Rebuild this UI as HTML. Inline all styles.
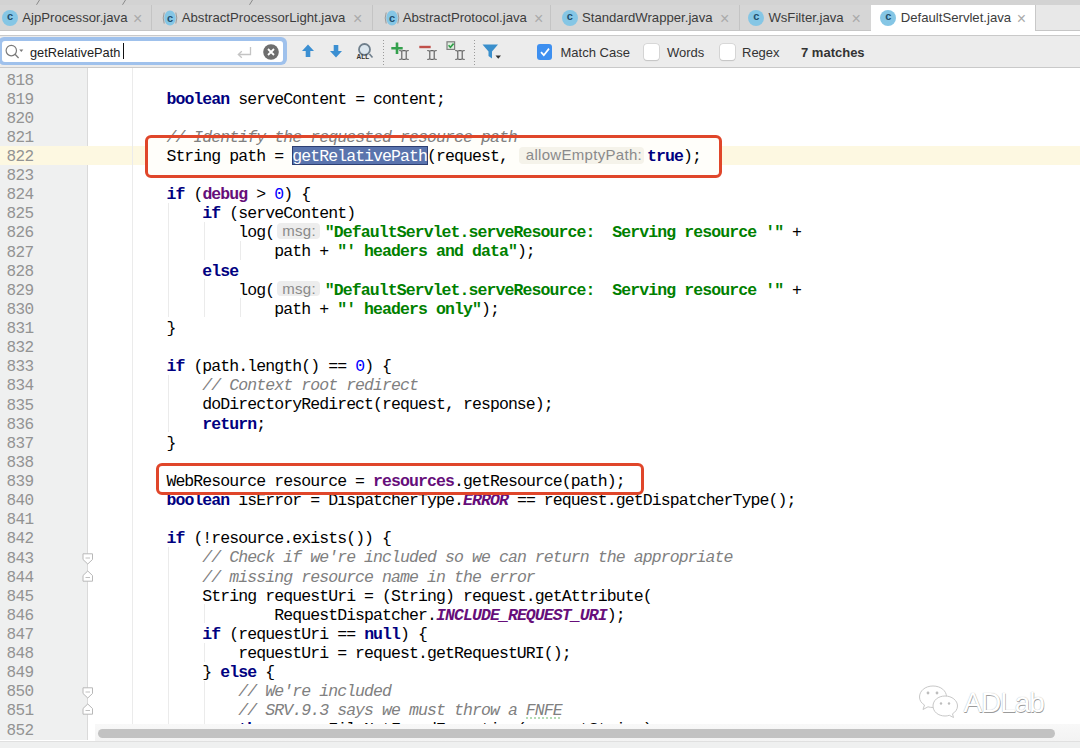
<!DOCTYPE html>
<html><head><meta charset="utf-8">
<style>
*{margin:0;padding:0;box-sizing:border-box}
html,body{width:1080px;height:748px;overflow:hidden;background:#fff;position:relative;font-family:"Liberation Sans",sans-serif}
div{position:absolute}
svg{display:block}
.tx{font-size:13.15px;color:#3c3c3c;white-space:nowrap;line-height:15px}
.x{font-size:16px;line-height:16px;color:#aaaaaa}
.ic{width:16px;height:16px;border-radius:50%;background:#85c6e5}
.ic i{position:absolute;left:0;top:0;width:16px;height:16px;line-height:17px;text-align:center;font:bold 11px "Liberation Sans",sans-serif;color:#1f4f6e;font-style:normal}
.ln{left:0;width:33.5px;text-align:right;font:16px/19.12px "Liberation Mono",monospace;letter-spacing:-0.615px;color:#939393}
.cl{left:94.5px;height:19.12px;font:16.5px/19.12px "Liberation Mono",monospace;letter-spacing:-0.915px;color:#000;white-space:pre}
.k{color:#000080;font-weight:bold}
.f{color:#660e7a;font-weight:bold}
.sf{color:#660e7a;font-weight:bold;font-style:italic}
.n{color:#0000ff}
.s{color:#008000;font-weight:bold}
.c{color:#808080;font-style:italic}
.hint{border-radius:4px;background:#ededed;color:#8a8a8a;font:15px/14px "Liberation Sans",sans-serif;letter-spacing:0.3px;white-space:nowrap}
.g{width:1px;background:#ebebeb}
.rb{border:3.6px solid #e0462a;border-radius:6px}
.lbl{font-size:13px;line-height:15px;color:#333;white-space:nowrap}
</style></head><body>
<div style="left:0;top:0;width:1080px;height:5px;background:#d3d3d3"></div>
<div style="left:0;top:5px;width:1080px;height:26px;background:#d6d6d6"></div>
<div style="left:35px;top:0;width:6px;height:5px"><svg width="6" height="5"><path d="M1.5 4.8 L4.5 0" stroke="#8a8a8a" stroke-width="1"/></svg></div>
<div style="left:121px;top:0;width:6px;height:5px"><svg width="6" height="5"><path d="M1.5 4.8 L4.5 0" stroke="#8a8a8a" stroke-width="1"/></svg></div>
<div style="left:248px;top:0;width:6px;height:5px"><svg width="6" height="5"><path d="M1.5 4.8 L4.5 0" stroke="#8a8a8a" stroke-width="1"/></svg></div>
<div style="left:0;top:30px;width:1080px;height:1px;background:#c6c6c6"></div>
<div style="left:150.5px;top:5px;width:1px;height:25px;background:#c4c4c4"></div>
<div style="left:372px;top:5px;width:1px;height:25px;background:#c4c4c4"></div>
<div style="left:550px;top:5px;width:1px;height:25px;background:#c4c4c4"></div>
<div style="left:738.5px;top:5px;width:1px;height:25px;background:#c4c4c4"></div>
<div style="left:871px;top:5px;width:164px;height:26px;background:#fff"></div>
<div style="left:1035px;top:5px;width:1px;height:25px;background:#c8c8c8"></div>
<div style="left:1036px;top:5px;width:44px;height:25px;background:#e8e8e8"></div>
<div class="ic" style="left:2px;top:10px"><i>c</i></div>
<div class="tx" style="left:22.3px;top:10px">AjpProcessor.java</div>
<div class="x" style="left:133px;top:10.5px">×</div>
<div style="left:160.9px;top:9px;width:18px;height:18px"><svg width="18" height="18" viewBox="0 0 18 18"><ellipse cx="9" cy="9" rx="5.8" ry="7.6" fill="#85c6e5"/><path d="M3.2 3.5 Q1.2 9 3.2 14.5 M14.8 3.5 Q16.8 9 14.8 14.5" stroke="#9a9a9a" stroke-width="1" fill="none"/><text x="9" y="13" text-anchor="middle" font-family="Liberation Sans" font-weight="bold" font-size="11" fill="#1f4f6e">c</text></svg></div>
<div class="tx" style="left:181.8px;top:10px">AbstractProcessorLight.java</div>
<div class="x" style="left:353px;top:10.5px">×</div>
<div style="left:382.5px;top:9px;width:18px;height:18px"><svg width="18" height="18" viewBox="0 0 18 18"><ellipse cx="9" cy="9" rx="5.8" ry="7.6" fill="#85c6e5"/><path d="M3.2 3.5 Q1.2 9 3.2 14.5 M14.8 3.5 Q16.8 9 14.8 14.5" stroke="#9a9a9a" stroke-width="1" fill="none"/><text x="9" y="13" text-anchor="middle" font-family="Liberation Sans" font-weight="bold" font-size="11" fill="#1f4f6e">c</text></svg></div>
<div class="tx" style="left:402.7px;top:10px">AbstractProtocol.java</div>
<div class="x" style="left:534px;top:10.5px">×</div>
<div class="ic" style="left:561.9px;top:10px"><i>c</i></div>
<div class="tx" style="left:582px;top:10px">StandardWrapper.java</div>
<div class="x" style="left:720px;top:10.5px">×</div>
<div class="ic" style="left:748.2px;top:10px"><i>c</i></div>
<div class="tx" style="left:768.4px;top:10px">WsFilter.java</div>
<div class="x" style="left:851.5px;top:10.5px">×</div>
<div class="ic" style="left:880.4px;top:10px"><i>c</i></div>
<div class="tx" style="left:900.8px;top:10px">DefaultServlet.java</div>
<div class="x" style="left:1016.8px;top:10.5px">×</div>
<div style="left:0;top:31px;width:1080px;height:4px;background:#fff"></div>
<div style="left:0;top:35px;width:1080px;height:33px;background:#ececec"></div>
<div style="left:0;top:35px;width:1080px;height:1px;background:#c9c9c9"></div>
<div style="left:0;top:67px;width:1080px;height:1px;background:#c9c9c9"></div>
<div style="left:-2px;top:37px;width:288.5px;height:28px;border-radius:6px;background:#9fc1ec"></div>
<div style="left:2px;top:41px;width:281px;height:20.5px;border-radius:3px;background:#fff"></div>
<div style="left:0;top:41px;width:30px;height:20px"><svg width="30" height="20" viewBox="0 0 30 20"><circle cx="11.3" cy="9.6" r="5.2" fill="none" stroke="#7a7a7a" stroke-width="1.2"/><line x1="15" y1="13.3" x2="18.6" y2="17" stroke="#7a7a7a" stroke-width="1.3"/><path d="M19.3 8.6 L23.3 8.6 L21.3 11.1 Z" fill="#7a7a7a"/></svg></div>
<div class="lbl" style="left:30px;top:44.5px;font-size:12.8px;color:#222">getRelativePath</div>
<div style="left:122.5px;top:43px;width:1px;height:16px;background:#111"></div>
<div style="left:234px;top:44px;width:20px;height:16px"><svg width="20" height="16" viewBox="0 0 20 16"><path d="M16.5 3 V10.5 H4.5 M7.8 7.2 L4.3 10.5 L7.8 13.8" fill="none" stroke="#c4c4c4" stroke-width="1.3"/></svg></div>
<div style="left:263px;top:43.5px;width:16px;height:16px"><svg width="16" height="16" viewBox="0 0 16 16"><circle cx="8" cy="8" r="7.8" fill="#6e6e6e"/><path d="M5 5 L11 11 M11 5 L5 11" stroke="#fff" stroke-width="1.8"/></svg></div>
<div style="left:300px;top:43px;width:16px;height:16px"><svg width="16" height="16" viewBox="0 0 16 16"><path d="M8 1.5 L14 8 H10.3 V14 H5.7 V8 H2 Z" fill="#3b8fd2"/></svg></div>
<div style="left:327.5px;top:43px;width:16px;height:16px"><svg width="16" height="16" viewBox="0 0 16 16"><path d="M8 14.5 L14 8 H10.3 V2 H5.7 V8 H2 Z" fill="#3b8fd2"/></svg></div>
<div style="left:355px;top:42px;width:20px;height:18px"><svg width="20" height="18" viewBox="0 0 20 18"><circle cx="9.5" cy="7.5" r="5.5" fill="#dbe6ee" stroke="#6f7f8c" stroke-width="1.8"/><text x="1.5" y="16.8" font-family="Liberation Sans" font-weight="bold" font-size="6.5" fill="#333">ALL</text><path d="M14.5 12 L17.5 15.5" stroke="#6f7f8c" stroke-width="1.6"/></svg></div>
<div style="left:382.5px;top:40px;width:1px;height:26px;background:repeating-linear-gradient(#9a9a9a 0 1px,transparent 1px 3px)"></div>
<div style="left:473.5px;top:40px;width:1px;height:26px;background:repeating-linear-gradient(#9a9a9a 0 1px,transparent 1px 3px)"></div>
<div style="left:389px;top:41px;width:16px;height:16px"><svg width="16" height="16" viewBox="0 0 16 16"><path d="M2.3 7.2 H13.7 M8 1.5 V12.9" stroke="#33a04c" stroke-width="2.6"/></svg></div>
<div style="left:398.8px;top:49.8px;width:10px;height:10px"><svg width="10" height="10" viewBox="0 0 10 10"><path d="M0.3 0.6 Q2.6 1.4 5 0.6 Q7.4 1.4 9.7 0.6 M0.3 9.4 Q2.6 8.6 5 9.4 Q7.4 8.6 9.7 9.4 M2.8 1 V9 M7.2 1 V9" stroke="#595959" stroke-width="1.1" fill="none"/></svg></div>
<div style="left:418px;top:44px;width:14px;height:6px"><svg width="14" height="6" viewBox="0 0 14 6"><path d="M1.3 3 H12.7" stroke="#c0504a" stroke-width="2.4"/></svg></div>
<div style="left:427px;top:49.8px;width:10px;height:10px"><svg width="10" height="10" viewBox="0 0 10 10"><path d="M0.3 0.6 Q2.6 1.4 5 0.6 Q7.4 1.4 9.7 0.6 M0.3 9.4 Q2.6 8.6 5 9.4 Q7.4 8.6 9.7 9.4 M2.8 1 V9 M7.2 1 V9" stroke="#595959" stroke-width="1.1" fill="none"/></svg></div>
<div style="left:446px;top:41px;width:10px;height:10px"><svg width="10" height="10" viewBox="0 0 10 10"><rect x="1" y="0.8" width="7.6" height="7.6" fill="#dfeee0" stroke="#7e7e7e" stroke-width="1.2"/><path d="M2.6 4.3 L4.4 6.2 L7.6 2.6" stroke="#2f9e48" stroke-width="1.6" fill="none"/></svg></div>
<div style="left:455px;top:49.8px;width:10px;height:10px"><svg width="10" height="10" viewBox="0 0 10 10"><path d="M0.3 0.6 Q2.6 1.4 5 0.6 Q7.4 1.4 9.7 0.6 M0.3 9.4 Q2.6 8.6 5 9.4 Q7.4 8.6 9.7 9.4 M2.8 1 V9 M7.2 1 V9" stroke="#595959" stroke-width="1.1" fill="none"/></svg></div>
<div style="left:481px;top:43px;width:22px;height:18px"><svg width="22" height="18" viewBox="0 0 22 18"><path d="M1.5 1.5 H17 L11 8.5 V15.5 L7.5 13 V8.5 Z" fill="#3a8fcc"/><path d="M14.5 12.5 H20 L17.25 15.8 Z" fill="#333"/></svg></div>
<div style="left:536.5px;top:44px;width:15.5px;height:15.5px;border-radius:3px;background:#3d8ff0"></div>
<div style="left:536.5px;top:44px;width:16px;height:16px"><svg width="16" height="16" viewBox="0 0 16 16"><path d="M4 8.2 L6.8 11.2 L12 4.6" stroke="#fff" stroke-width="1.7" fill="none"/></svg></div>
<div class="lbl" style="left:560.5px;top:44.5px">Match Case</div>
<div style="left:643.5px;top:44px;width:15.5px;height:15.5px;border-radius:3px;background:#fff;box-shadow:0 0 0 0.6px #c9c9c9,0 0.5px 1px #c0c0c0"></div>
<div class="lbl" style="left:667px;top:44.5px">Words</div>
<div style="left:719.5px;top:44px;width:15.5px;height:15.5px;border-radius:3px;background:#fff;box-shadow:0 0 0 0.6px #c9c9c9,0 0.5px 1px #c0c0c0"></div>
<div class="lbl" style="left:742px;top:44.5px">Regex</div>
<div class="lbl" style="left:801px;top:44.5px;font-weight:bold">7 matches</div>
<div style="left:0;top:68px;width:87px;height:672px;background:#eff0f0"></div>
<div style="left:87px;top:68px;width:1px;height:672px;background:#dadada"></div>
<div style="left:0;top:145.68px;width:1080px;height:19.4px;background:#fdf8e1"></div>
<div class="g" style="left:131.8px;top:68px;height:660px"></div>
<div class="g" style="left:168.4px;top:202.7px;height:114.7px"></div>
<div class="g" style="left:204.3px;top:221.9px;height:38.2px"></div>
<div class="g" style="left:204.3px;top:279.2px;height:38.2px"></div>
<div class="g" style="left:240.3px;top:241.0px;height:19.1px"></div>
<div class="g" style="left:240.3px;top:298.3px;height:19.1px"></div>
<div class="g" style="left:168.4px;top:374.8px;height:57.4px"></div>
<div class="g" style="left:168.4px;top:546.9px;height:191.2px"></div>
<div class="g" style="left:204.3px;top:604.3px;height:19.1px"></div>
<div class="g" style="left:204.3px;top:642.5px;height:19.1px"></div>
<div class="g" style="left:204.3px;top:680.7px;height:57.4px"></div>
<div class="ln" style="top:71.50px">818</div>
<div class="ln" style="top:90.62px">819</div>
<div class="ln" style="top:109.74px">820</div>
<div class="ln" style="top:128.86px">821</div>
<div class="ln" style="top:147.98px">822</div>
<div class="ln" style="top:167.10px">823</div>
<div class="ln" style="top:186.22px">824</div>
<div class="ln" style="top:205.34px">825</div>
<div class="ln" style="top:224.46px">826</div>
<div class="ln" style="top:243.58px">827</div>
<div class="ln" style="top:262.70px">828</div>
<div class="ln" style="top:281.82px">829</div>
<div class="ln" style="top:300.94px">830</div>
<div class="ln" style="top:320.06px">831</div>
<div class="ln" style="top:339.18px">832</div>
<div class="ln" style="top:358.30px">833</div>
<div class="ln" style="top:377.42px">834</div>
<div class="ln" style="top:396.54px">835</div>
<div class="ln" style="top:415.66px">836</div>
<div class="ln" style="top:434.78px">837</div>
<div class="ln" style="top:453.90px">838</div>
<div class="ln" style="top:473.02px">839</div>
<div class="ln" style="top:492.14px">840</div>
<div class="ln" style="top:511.26px">841</div>
<div class="ln" style="top:530.38px">842</div>
<div class="ln" style="top:549.50px">843</div>
<div class="ln" style="top:568.62px">844</div>
<div class="ln" style="top:587.74px">845</div>
<div class="ln" style="top:606.86px">846</div>
<div class="ln" style="top:625.98px">847</div>
<div class="ln" style="top:645.10px">848</div>
<div class="ln" style="top:664.22px">849</div>
<div class="ln" style="top:683.34px">850</div>
<div class="ln" style="top:702.46px">851</div>
<div class="ln" style="top:721.58px">852</div>
<div style="left:82px;top:552.6px;width:12px;height:12px"><svg width="12" height="12" viewBox="0 0 12 12"><path d="M1 0.8 H10.5 V6.5 L5.75 11 L1 6.5 Z" fill="#fff" stroke="#b8b8b8" stroke-width="1"/><path d="M3.5 5 H8" stroke="#b0b0b0" stroke-width="0.8"/></svg></div>
<div style="left:82px;top:569.7px;width:12px;height:12px"><svg width="12" height="12" viewBox="0 0 12 12"><path d="M1 11.2 H10.5 V5.5 L5.75 1 L1 5.5 Z" fill="#fff" stroke="#b8b8b8" stroke-width="1"/><path d="M3.5 7.5 H8" stroke="#b0b0b0" stroke-width="0.8"/></svg></div>
<div style="left:82px;top:686.6px;width:12px;height:12px"><svg width="12" height="12" viewBox="0 0 12 12"><path d="M1 0.8 H10.5 V6.5 L5.75 11 L1 6.5 Z" fill="#fff" stroke="#b8b8b8" stroke-width="1"/><path d="M3.5 5 H8" stroke="#b0b0b0" stroke-width="0.8"/></svg></div>
<div style="left:82px;top:703.4px;width:12px;height:12px"><svg width="12" height="12" viewBox="0 0 12 12"><path d="M1 11.2 H10.5 V5.5 L5.75 1 L1 5.5 Z" fill="#fff" stroke="#b8b8b8" stroke-width="1"/><path d="M3.5 7.5 H8" stroke="#b0b0b0" stroke-width="0.8"/></svg></div>
<div style="left:147px;top:137px;width:573px;height:40px;border-radius:5px;background:#fffefa"></div>
<div class="cl" style="top:89.52px">        <span class="k">boolean</span> serveContent = content;</div>
<div class="cl" style="top:127.76px">        <span class="c">// Identify the requested resource path</span></div>
<div class="cl" style="top:185.12px">        <span class="k">if</span> (<span class="f">debug</span> &gt; <span class="n">0</span>) {</div>
<div class="cl" style="top:204.24px">            <span class="k">if</span> (serveContent)</div>
<div class="cl" style="top:242.48px">                    path + <span class="s">"' headers and data"</span>);</div>
<div class="cl" style="top:261.60px">            <span class="k">else</span></div>
<div class="cl" style="top:299.84px">                    path + <span class="s">"' headers only"</span>);</div>
<div class="cl" style="top:318.96px">        }</div>
<div class="cl" style="top:357.20px">        <span class="k">if</span> (path.length() == <span class="n">0</span>) {</div>
<div class="cl" style="top:376.32px">            <span class="c">// Context root redirect</span></div>
<div class="cl" style="top:395.44px">            doDirectoryRedirect(request, response);</div>
<div class="cl" style="top:414.56px">            <span class="k">return</span>;</div>
<div class="cl" style="top:433.68px">        }</div>
<div class="cl" style="top:491.04px">        <span class="k">boolean</span> isError = DispatcherType.<span class="sf">ERROR</span> == request.getDispatcherType();</div>
<div class="cl" style="top:529.28px">        <span class="k">if</span> (!resource.exists()) {</div>
<div class="cl" style="top:548.40px">            <span class="c">// Check if we're included so we can return the appropriate</span></div>
<div class="cl" style="top:567.52px">            <span class="c">// missing resource name in the error</span></div>
<div class="cl" style="top:586.64px">            String requestUri = (String) request.getAttribute(</div>
<div class="cl" style="top:605.76px">                    RequestDispatcher.<span class="sf">INCLUDE_REQUEST_URI</span>);</div>
<div class="cl" style="top:624.88px">            <span class="k">if</span> (requestUri == <span class="k">null</span>) {</div>
<div class="cl" style="top:644.00px">                requestUri = request.getRequestURI();</div>
<div class="cl" style="top:663.12px">            } <span class="k">else</span> {</div>
<div class="cl" style="top:682.24px">                <span class="c">// We're included</span></div>
<div class="cl" style="top:701.36px">                <span class="c">// SRV.9.3 says we must throw a FNFE</span></div>
<div class="cl" style="top:720.48px">                <span class="k">throw new</span> FileNotFoundException(requestString);</div>
<div style="left:292.4px;top:146px;width:135.2px;height:18.8px;background:#5a74ad;border:1px solid #2d3f72"></div>
<div class="cl" style="top:146.88px">        String path = <span style="color:#fff">getRelativePath</span>(request, </div>
<div class="hint" style="left:519.3px;top:146.7px;width:125px;height:17px;padding:1.5px 0 0 6.5px;background:#f5f3ea">allowEmptyPath:</div>
<div class="cl" style="top:146.88px;left:647px"><span class="k">true</span>);</div>
<div class="cl" style="top:223.36px">                log(</div>
<div class="hint" style="left:276.7px;top:223.46px;width:43px;height:15.5px;padding:0.8px 0 0 5.5px">msg:</div>
<div class="cl" style="top:223.36px;left:324.8px"><span class="s">"DefaultServlet.serveResource:  Serving resource &#39;"</span> +</div>
<div class="cl" style="top:280.72px">                log(</div>
<div class="hint" style="left:276.7px;top:280.82px;width:43px;height:15.5px;padding:0.8px 0 0 5.5px">msg:</div>
<div class="cl" style="top:280.72px;left:324.8px"><span class="s">"DefaultServlet.serveResource:  Serving resource &#39;"</span> +</div>
<div class="rb" style="left:155.7px;top:462.8px;width:488px;height:32.6px;background:#fff"></div>
<div class="cl" style="top:471.92px">        WebResource resource = <span class="f">resources</span>.getResource(path);</div>
<div class="rb" style="left:145.4px;top:135.4px;width:576.4px;height:43px"></div>
<div style="left:525.8px;top:716.9px;width:36px;height:2px;background:repeating-linear-gradient(90deg,#b5dcb5 0 2px,transparent 2px 4px)"></div>
<div style="left:95px;top:724px;width:985px;height:17px;background:linear-gradient(#f8f8f8,#f3f3f3)"></div>
<div style="left:98px;top:729px;width:957px;height:8.7px;border-radius:4.5px;background:#c2c2c2"></div>
<div style="left:0;top:741px;width:1080px;height:7px;background:#eff0f0"></div>
<div style="left:0;top:740.5px;width:1080px;height:1px;background:#e0e0e0"></div>
<div style="left:918px;top:684px;width:42px;height:34px"><svg width="42" height="34" viewBox="0 0 42 34"><g fill="#fff" stroke="#c8c8c8" stroke-width="1"><path d="M15 2 C7 2 1.5 7 1.5 13 C1.5 16.5 3.5 19.3 6.5 21 L5 25.5 L10 22.8 C11.5 23.2 13 23.5 15 23.5 C23 23.5 28.5 18.5 28.5 12.8 C28.5 7 23 2 15 2 Z"/><path d="M27 12 C20 12 15 16.5 15 22 C15 27.5 20 32 27 32 C28.5 32 30 31.8 31.3 31.3 L35.5 33.5 L34.5 29.8 C37.5 28 39.5 25.2 39.5 22 C39.5 16.5 34 12 27 12 Z"/></g><g fill="#bdbdbd"><circle cx="10" cy="9" r="1.4"/><circle cx="19" cy="9" r="1.4"/><circle cx="23" cy="19.5" r="1.2"/><circle cx="31" cy="19.5" r="1.2"/></g></svg></div>
<div style="left:963.5px;top:687.5px;font:28px/30px 'Liberation Sans',sans-serif;color:#fff;letter-spacing:-1.1px;text-shadow:0 0 1px #a8a8a8,0.6px 0.6px 0.6px #9a9a9a">ADLab</div>
</body></html>
